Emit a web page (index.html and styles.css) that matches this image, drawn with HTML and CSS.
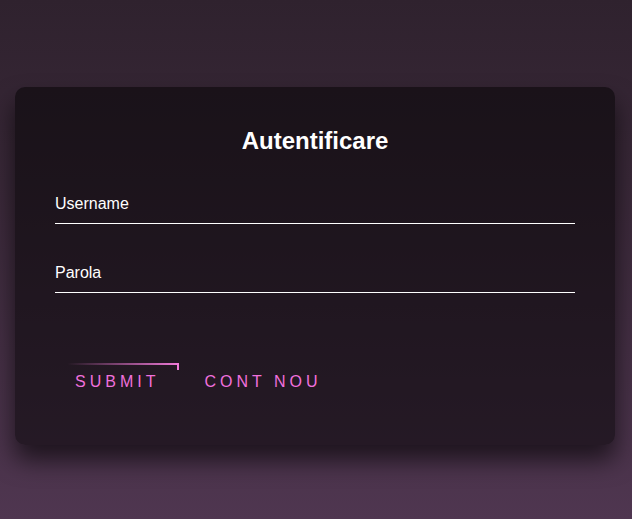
FILE: index.html
```html
<!DOCTYPE html>
<html lang="ro">
<head>
<meta charset="utf-8">
<title>Autentificare</title>
<link rel="stylesheet" href="styles.css">
</head>
<body>
<main class="page">
  <div class="login-box">
    <h2 class="title">Autentificare</h2>
    <form class="form">
      <div class="user-box">
        <input class="field" type="text" required>
        <label class="label">Username</label>
      </div>
      <div class="user-box">
        <input class="field" type="password" required>
        <label class="label">Parola</label>
      </div>
      <div class="actions">
        <a href="#" class="btn btn-active"><span class="line line-top"></span><span class="line line-right"></span>Submit</a>
        <a href="#" class="btn">Cont nou</a>
      </div>
    </form>
  </div>
</main>
</body>
</html>
```
FILE: styles.css
```css
* { box-sizing: border-box; }
html, body { margin: 0; padding: 0; }
body {
  height: 519px;
  overflow: hidden;
  font-family: "Liberation Sans", Arial, sans-serif;
  background: linear-gradient(180deg, #2f222e 0%, #392838 35%, #4f3650 100%);
}
.page {
  display: flex;
  justify-content: flex-start;
  padding: 87px 0 0 15px;
}
.login-box {
  width: 600px;
  padding: 40px 40px 44px;
  background: rgba(0, 0, 0, 0.5);
  border-radius: 10px;
  box-shadow: 0 15px 25px rgba(0, 0, 0, 0.6);
}
.title {
  margin: 0 0 30px;
  padding: 0;
  color: #fff;
  text-align: center;
  font-size: 24px;
  font-weight: bold;
}
.form {
  display: flex;
  flex-direction: column;
  margin: 0;
}
.user-box { position: relative; margin-bottom: 30px; }
.field {
  display: block;
  width: 100%;
  padding: 10px 0;
  font-family: inherit;
  font-size: 16px;
  line-height: 18px;
  color: #fff;
  margin: 0;
  border: none;
  border-bottom: 1px solid #fff;
  outline: none;
  background: transparent;
}
.label {
  position: absolute;
  top: 0;
  left: 0;
  padding: 10px 0;
  font-size: 16px;
  line-height: 18px;
  color: #fff;
  pointer-events: none;
}
.actions {
  margin-top: 40px;
  display: flex;
  gap: 5px;
}
.btn {
  position: relative;
  display: inline-block;
  padding: 10px 20px;
  color: #f070dc;
  font-size: 16px;
  line-height: 18px;
  text-decoration: none;
  text-transform: uppercase;
  letter-spacing: 4px;
  overflow: hidden;
}
.line { position: absolute; display: block; }
.line-top {
  top: 0;
  left: 0;
  width: 100%;
  height: 2px;
  background: linear-gradient(90deg, transparent 10%, #f07ad8);
}
.line-right {
  top: 0;
  right: 0;
  width: 2px;
  height: 7px;
  background: #f07ad8;
}
```
